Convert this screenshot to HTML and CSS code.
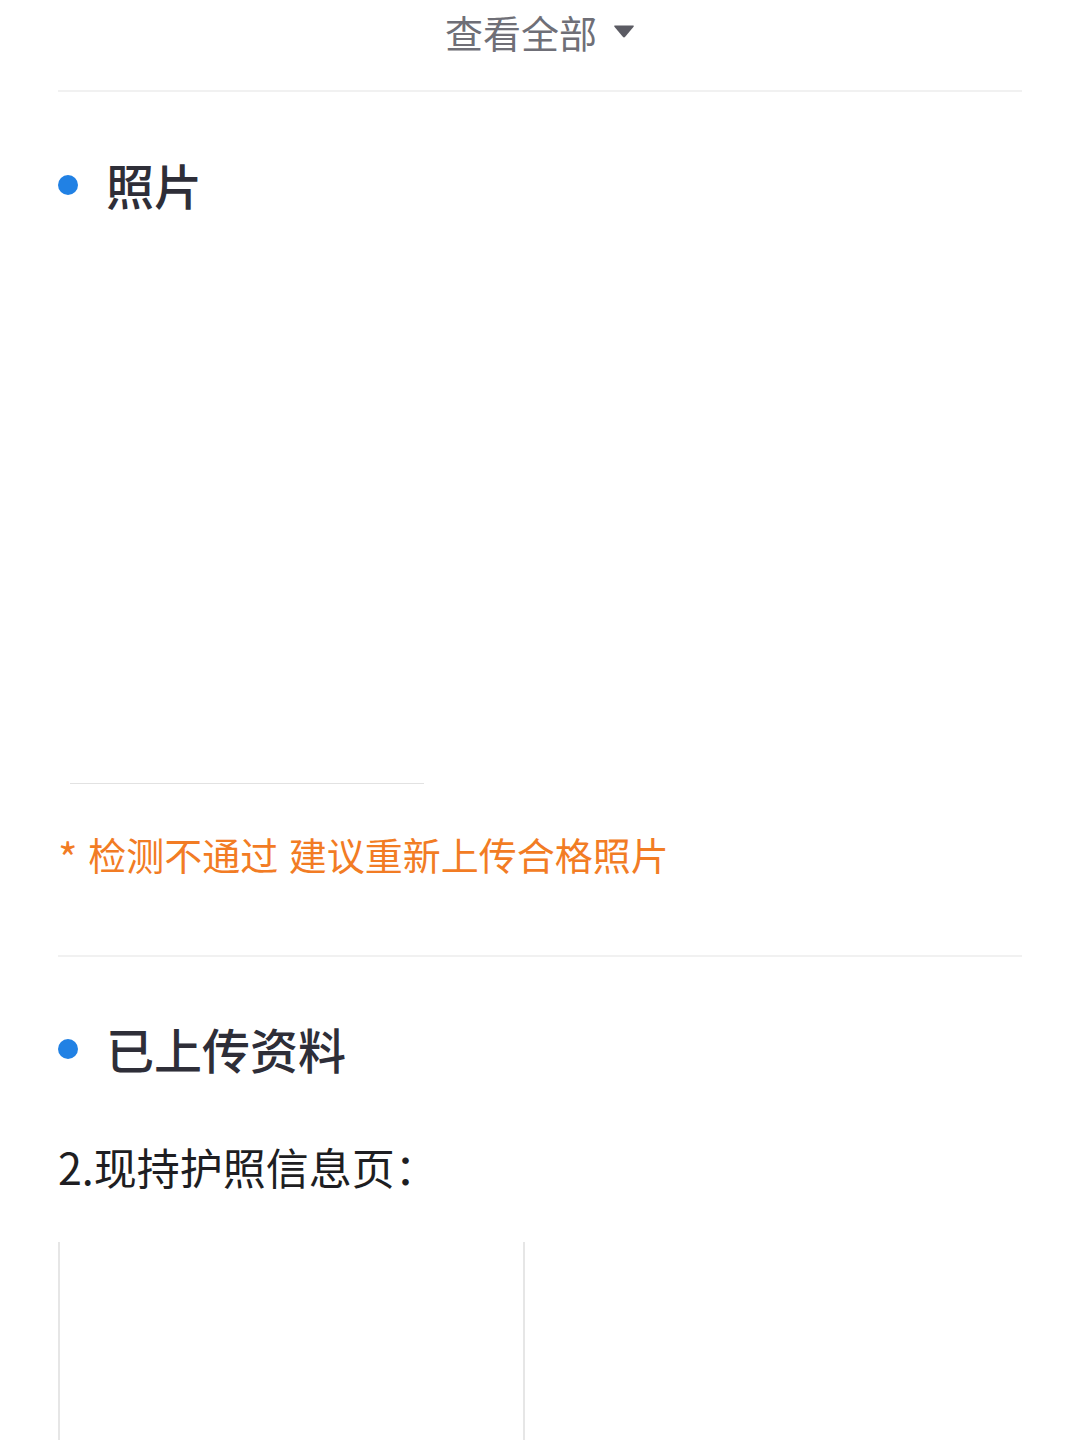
FILE: index.html
```html
<!DOCTYPE html>
<html lang="zh-CN">
<head>
<meta charset="utf-8">
<title>照片</title>
<link rel="stylesheet" href="styles.css">
</head>
<body>
<div class="page">
  <div class="more">
    <span class="more-text">查看全部</span>
    <svg class="more-arrow" width="22" height="14" viewBox="0 0 22 14"><path d="M2 1.5 H20 Q21.5 1.5 20.6 2.8 L12.2 12.8 Q11 14 9.8 12.8 L1.4 2.8 Q0.5 1.5 2 1.5 Z" fill="#5b5b63"/></svg>
  </div>
  <div class="divider divider-top"></div>

  <div class="section-title title-photo">
    <span class="dot"></span>
    <span class="title-text">照片</span>
  </div>
  <div class="photo-box"></div>
  <div class="warn"><span class="star">*</span> 检测不通过 建议重新上传合格照片</div>

  <div class="divider divider-mid"></div>

  <div class="section-title title-uploaded">
    <span class="dot"></span>
    <span class="title-text">已上传资料</span>
  </div>
  <div class="label">2.现持护照信息页：</div>
  <div class="docs">
    <div class="doc-box"></div>
    <div class="doc-box"></div>
  </div>
</div>
</body>
</html>
```

FILE: styles.css
```css
html, body {
  margin: 0;
  padding: 0;
  background: #ffffff;
}
body {
  width: 1080px;
  height: 1441px;
  overflow: hidden;
  font-family: "Noto Sans CJK SC", "Noto Sans", sans-serif;
}
.page {
  padding: 0 58px;
}
.more {
  height: 64px;
  display: flex;
  justify-content: center;
  align-items: center;
  gap: 16px;
  margin-bottom: 26px;
}
.more-text {
  font-size: 38px;
  line-height: 64px;
  color: #6f6f77;
}
.more-arrow {
  display: block;
  margin-top: -2px;
}
.divider {
  height: 2px;
  background: #f1f1f1;
}
.section-title {
  display: flex;
  align-items: center;
  height: 60px;
}
.title-photo {
  margin-top: 63px;
}
.title-uploaded {
  margin-top: 62px;
}
.dot {
  width: 20px;
  height: 20px;
  border-radius: 50%;
  background: #2181e4;
  margin-right: 28px;
  flex: none;
}
.title-text {
  font-size: 48px;
  line-height: 60px;
  font-weight: 500;
  color: #2e2e38;
  margin-top: -3px;
}
.photo-box {
  width: 354px;
  height: 539px;
  margin: 29px 0 0 12px;
  border-bottom: 1px solid #e2e2e2;
}
.warn {
  margin-top: 45px;
  font-size: 38px;
  line-height: 50px;
  color: #f27c24;
  word-spacing: 2px;
  white-space: nowrap;
}
.star {
  font-size: 42px;
  line-height: 40px;
  vertical-align: -5px;
}
.divider-mid {
  margin-top: 76px;
}
.label {
  margin-top: 59px;
  font-size: 43px;
  line-height: 56px;
  color: #1e1e22;
}
.docs {
  margin-top: 48px;
  display: grid;
  grid-template-columns: 445px 445px;
  column-gap: 20px;
}
.doc-box {
  height: 198px;
  border-left: 2px solid #e6e6e6;
}
```
